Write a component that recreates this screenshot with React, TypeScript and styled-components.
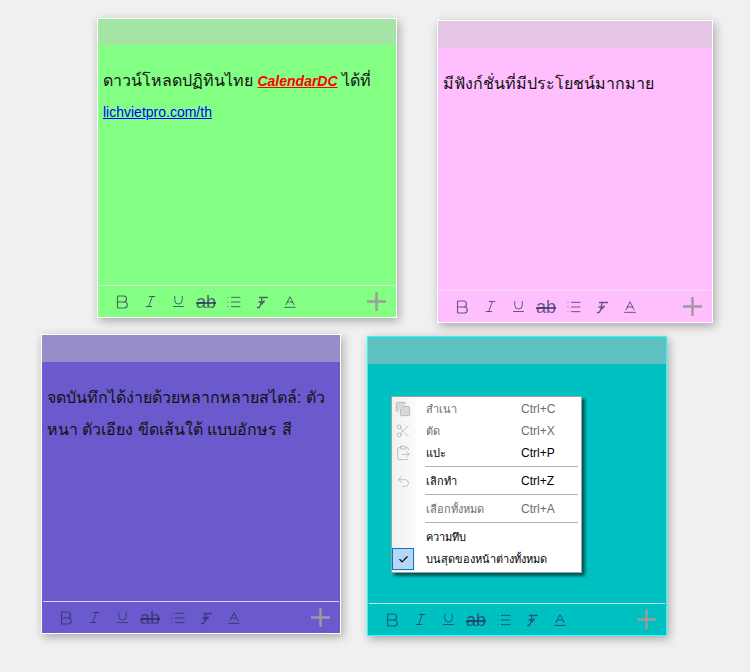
import React from 'react';
import styled, { createGlobalStyle } from 'styled-components';
import { Bold, Italic, Underline, List, Baseline, Check, Copy, Scissors, ClipboardPaste, Undo2 } from 'lucide-react';

const GlobalStyle = createGlobalStyle`
  html, body {
    margin: 0;
    padding: 0;
    background: #f0f0f0;
    font-family: "Liberation Sans", "Noto Sans", sans-serif;
  }
`;

const Desktop = styled.div`
  position: relative;
  width: 750px;
  height: 672px;
  overflow: hidden;
  background: #f0f0f0;
`;

const Note = styled.section<{ $x: number; $y: number; $w: number; $h: number; $bg: string; $edge: string }>`
  position: absolute;
  left: ${p => p.$x}px;
  top: ${p => p.$y}px;
  width: ${p => p.$w}px;
  height: ${p => p.$h}px;
  box-sizing: border-box;
  display: flex;
  flex-direction: column;
  background: ${p => p.$bg};
  border: 1px solid ${p => p.$edge};
  box-shadow: 2px 3px 9px rgba(0, 0, 0, 0.3);
`;

const TitleBar = styled.div<{ $bg: string; $h: number }>`
  flex: none;
  height: ${p => p.$h}px;
  background: ${p => p.$bg};
`;

const Body = styled.div`
  flex: 1;
  padding: 20px 5px 0;
  color: #111;
  font-size: 16px;
  line-height: 32px;
`;

const Line = styled.div``;

const Brand = styled.a`
  color: #f00;
  font-size: 14px;
  font-weight: 700;
  font-style: italic;
  text-decoration: underline;
`;

const WebLink = styled.a`
  display: block;
  color: #00f;
  font-size: 14px;
  line-height: 30px;
  text-decoration: underline;
`;

const Toolbar = styled.div`
  flex: none;
  height: 31px;
  margin: 0 1px;
  padding: 0 9px 0 9px;
  display: flex;
  align-items: center;
  border-top: 1px solid rgba(235, 225, 235, 0.9);
  color: rgba(45, 45, 90, 0.72);
`;

const Tool = styled.span<{ $w?: number }>`
  flex: none;
  width: ${p => p.$w ?? 28}px;
  display: flex;
  justify-content: center;
  align-items: center;
`;

const StruckText = styled.span`
  font-size: 18px;
  line-height: 20px;
  text-decoration: line-through;
  text-decoration-thickness: 2px;
`;

const PlusBox = styled.span`
  margin-left: auto;
  display: flex;
  color: #a09aa0;
`;

const Menu = styled.div`
  position: absolute;
  left: 23px;
  top: 59px;
  width: 191px;
  box-sizing: border-box;
  padding: 1px 0 2px;
  background: linear-gradient(90deg, #f0f0f0 0, #fbfbfb 23px, #fff 24px);
  border: 1px solid #a0a0a0;
  box-shadow: 3px 3px 3px rgba(0, 0, 0, 0.55);
  font-size: 11px;
`;

const MenuRow = styled.div<{ $off?: boolean }>`
  height: 22px;
  display: flex;
  align-items: center;
  color: ${p => (p.$off ? '#6d6d6d' : '#000')};
`;

const IconSlot = styled.span<{ $checked?: boolean }>`
  flex: none;
  width: 22px;
  height: 22px;
  margin-right: 12px;
  box-sizing: border-box;
  display: flex;
  align-items: center;
  justify-content: center;
  color: #a5a5a5;
  ${p => p.$checked && `
    background: #b5d7f3;
    border: 1px solid #0078d7;
    color: #000;
  `}
`;

const MenuLabel = styled.span`
  flex: 1;
`;

const Shortcut = styled.span`
  width: 60px;
  flex: none;
  font-size: 12px;
`;

const MenuRule = styled.div`
  height: 1px;
  margin: 2px 3px 3px 33px;
  background: #b0b0b0;
`;

const FormatIcon = () => (
  <svg width="14" height="14" viewBox="0 0 14 14" fill="none" stroke="currentColor" strokeWidth="1.3">
    <path d="M4 2.5h9M7 2.5C6.5 6 6 10 4.5 12c-.6.8-1.8.8-2.5.2M3.5 7h6M9.5 5.5l-3 4" />
  </svg>
);

const Plus = () => (
  <svg width="19" height="19" viewBox="0 0 19 19" stroke="currentColor" strokeWidth="2.4">
    <path d="M9.5 0v19M0 9.5h19" />
  </svg>
);

const NoteToolbar = () => (
  <Toolbar>
    <Tool><Bold size={18} strokeWidth={1.5} /></Tool>
    <Tool><Italic size={15} strokeWidth={1.6} /></Tool>
    <Tool><Underline size={15} strokeWidth={1.6} /></Tool>
    <Tool><StruckText>ab</StruckText></Tool>
    <Tool><List size={16} strokeWidth={1.5} /></Tool>
    <Tool><FormatIcon /></Tool>
    <Tool><Baseline size={16} strokeWidth={1.5} /></Tool>
    <PlusBox><Plus /></PlusBox>
  </Toolbar>
);

export default function App() {
  return (
    <Desktop>
      <GlobalStyle />
      <Note $x={97} $y={18} $w={300} $h={300} $bg="#83ff83" $edge="#fff">
        <TitleBar $bg="#a4e4a4" $h={26} />
        <Body>
          <Line>ดาวน์โหลดปฏิทินไทย <Brand>CalendarDC</Brand> ได้ที่</Line>
          <WebLink>lichvietpro.com/th</WebLink>
        </Body>
        <NoteToolbar />
      </Note>

      <Note $x={437} $y={20} $w={276} $h={303} $bg="#ffbfff" $edge="#fff">
        <TitleBar $bg="#e5c5e5" $h={27} />
        <Body>
          <Line>มีฟังก์ชั่นที่มีประโยชน์มากมาย</Line>
        </Body>
        <NoteToolbar />
      </Note>

      <Note $x={41} $y={334} $w={300} $h={300} $bg="#6a5acd" $edge="#fff">
        <TitleBar $bg="#988cca" $h={27} />
        <Body>
          <Line>จดบันทึกได้ง่ายด้วยหลากหลายสไตล์: ตัว</Line>
          <Line>หนา ตัวเอียง ขีดเส้นใต้ แบบอักษร สี</Line>
        </Body>
        <NoteToolbar />
      </Note>

      <Note $x={367} $y={336} $w={300} $h={300} $bg="#00c1c1" $edge="#2ff">
        <TitleBar $bg="#5fc1c1" $h={27} />
        <Body />
        <NoteToolbar />
        <Menu>
          <MenuRow $off><IconSlot><Copy size={16} fill="#d8d8d8" strokeWidth={1} /></IconSlot><MenuLabel>สำเนา</MenuLabel><Shortcut>Ctrl+C</Shortcut></MenuRow>
          <MenuRow $off><IconSlot><Scissors size={16} strokeWidth={1} /></IconSlot><MenuLabel>ตัด</MenuLabel><Shortcut>Ctrl+X</Shortcut></MenuRow>
          <MenuRow><IconSlot><ClipboardPaste size={16} strokeWidth={1} /></IconSlot><MenuLabel>แปะ</MenuLabel><Shortcut>Ctrl+P</Shortcut></MenuRow>
          <MenuRule />
          <MenuRow><IconSlot><Undo2 size={15} strokeWidth={1} /></IconSlot><MenuLabel>เลิกทำ</MenuLabel><Shortcut>Ctrl+Z</Shortcut></MenuRow>
          <MenuRule />
          <MenuRow $off><IconSlot /><MenuLabel>เลือกทั้งหมด</MenuLabel><Shortcut>Ctrl+A</Shortcut></MenuRow>
          <MenuRule />
          <MenuRow><IconSlot /><MenuLabel>ความทึบ</MenuLabel></MenuRow>
          <MenuRow><IconSlot $checked><Check size={11} strokeWidth={2.5} /></IconSlot><MenuLabel>บนสุดของหน้าต่างทั้งหมด</MenuLabel></MenuRow>
        </Menu>
      </Note>
    </Desktop>
  );
}
